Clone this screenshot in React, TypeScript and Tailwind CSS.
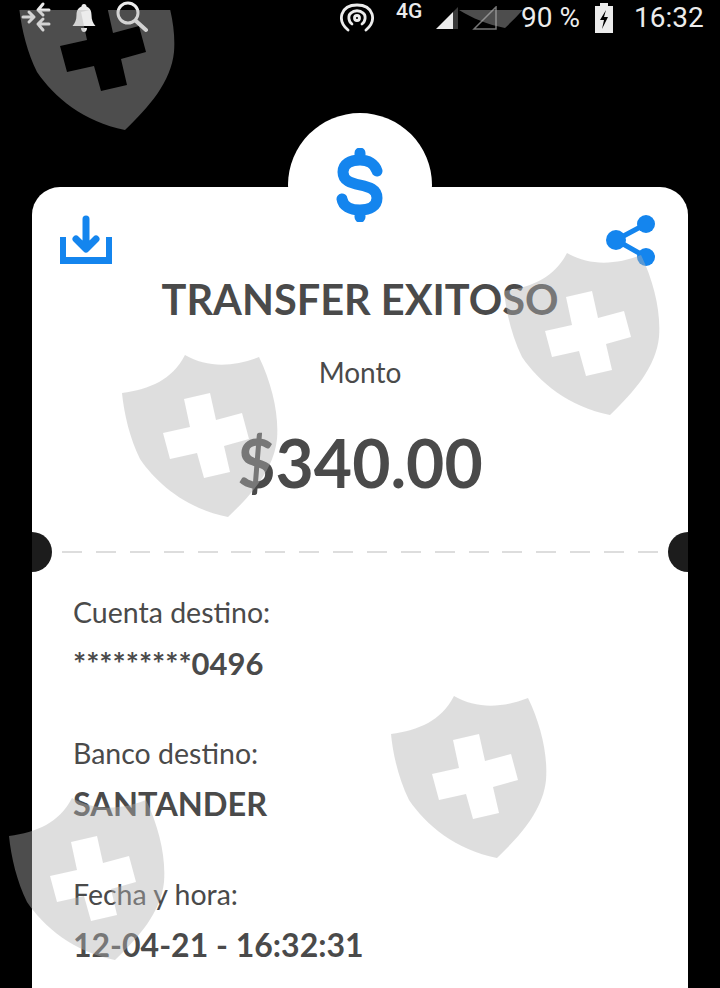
const shields = [
  'left-[19px] top-[-43px]',
  'left-[399px] top-[-145px]',
  'left-[504px] top-[242px]',
  'left-[122px] top-[344px]',
  'left-[391px] top-[685px]',
  'left-[9px] top-[787px]',
];

function Watermark({ className }: { className: string }) {
  return (
    <svg className={`absolute ${className}`} width="156" height="165" viewBox="0 0 156 165">
      <path
        fill="#b3b3b3"
        fillOpacity="0.43"
        fillRule="evenodd"
        d="M0 39C28 35 50 26 63 1C85 14 112 13 137 3C150 30 157 60 155 85C152 115 130 140 106 163C65 155 35 130 18 105C8 85 2 60 0 39ZM62 45L88 39L94 66L120 59L127 85L102 92L108 118L82 124L75 99L48 105L41 79L68 73Z"
      />
    </svg>
  );
}

function Field({ label, value, valueSize }: { label: string; value: string; valueSize: string }) {
  return (
    <div className="flex flex-col">
      <span className="h-[30px] text-[28.500px] leading-[30px] text-[#4a4a4a]">{label}</span>
      <span className={`mt-[21px] h-[30px] leading-[30px] font-bold text-[#4a4a4a] ${valueSize}`}>{value}</span>
    </div>
  );
}

function StatusBar() {
  return (
    <div className="flex h-[38px] items-start pt-[1px] text-[#ececec] font-['Roboto',sans-serif]">
      <svg className="ml-[21px]" width="30" height="32" viewBox="0 0 30 32" fill="none" stroke="currentColor" strokeWidth="3" strokeLinecap="round" strokeLinejoin="round">
        <path d="M2 16H13M8 11l5 5-5 5M28 9H17M22 3l-5 6 5 5M28 23H17M22 18l-5 5 5 6" />
      </svg>
      <svg className="ml-[21px] mt-[2px]" width="24" height="30" viewBox="0 0 24 30" fill="currentColor">
        <path d="M12 1c2 0 2.500 1.500 2.500 2.500C18.500 5 19.500 8.500 19.500 12c0 5 1.500 8 4 11H.5c2.500-3 4-6 4-11 0-3.500 1-7 5-8.500C9.500 2.500 10 1 12 1ZM9 25h6c0 2-1 4-3 4s-3-2-3-4Z" />
      </svg>
      <svg className="ml-[19px]" width="33" height="32" viewBox="0 0 33 32" fill="none" stroke="currentColor" strokeLinecap="round">
        <circle cx="13" cy="12" r="10" strokeWidth="3" />
        <path d="M21 20L31 29" strokeWidth="4" />
      </svg>
      <svg className="ml-[192px] mt-[2px]" width="34" height="30" viewBox="0 0 34 30" fill="none" stroke="currentColor" strokeWidth="2.800" strokeLinecap="round">
        <path d="M8 27C2 22 0.500 16 2 11C4 5 10 2 17 2C24 2 30 5 32 11C33.500 16 32 22 26 27" />
        <path d="M12 21C8 18 8 12 11 10C14 7 20 7 23 10C26 12 26 18 22 21" />
        <circle cx="17" cy="15" r="2.500" />
      </svg>
      <span className="ml-[22px] mt-[-2px] w-[28px] text-[21px] leading-[24px] font-medium">4G</span>
      <svg className="ml-[12px] mt-[5px]" width="64" height="26" viewBox="0 0 64 26">
        <path d="M17 6L22 1V23H17Z" fill="#3a3a3a" />
        <path d="M0 23L17 6V23Z" fill="currentColor" />
        <path d="M38 23L60 1V23Z" fill="none" stroke="#777777" strokeWidth="1.500" />
      </svg>
      <span className="ml-[21px] mt-[1px] w-[60px] whitespace-nowrap text-[28px] leading-[32px]">90 %</span>
      <svg className="ml-[14px] mt-[2px]" width="18" height="30" viewBox="0 0 18 30">
        <path fillRule="evenodd" fill="currentColor" d="M5 0H13V3H18V30H0V3H5ZM11 7L5 17H9L7 26L13 14H9Z" />
      </svg>
      <span className="ml-[21px] mt-[1px] text-[28px] leading-[32px]">16:32</span>
    </div>
  );
}

export default function App() {
  return (
    <div className="relative h-[988px] w-[720px] overflow-hidden bg-black font-['Lato',sans-serif]">
      <StatusBar />

      <div className="relative z-10 mt-[75px] flex justify-center">
        <div className="flex h-[144px] w-[144px] justify-center rounded-full bg-white pt-[35px]">
          <svg width="48" height="74" viewBox="0 0 48 74" fill="none" stroke="#1485ee" strokeWidth="11" strokeLinecap="round">
            <path d="M24 5V12M24 62V69M41 23C39 16 32 12 24 12C14 12 7 16 7 24C7 33 15 35 24 37C33 39 41 41 41 50C41 58 34 62 24 62C14 62 7 58 6 51" />
          </svg>
        </div>
      </div>

      <div className="absolute left-[32px] top-[187px] h-[801px] w-[656px] overflow-hidden rounded-t-[28px] bg-white">
        <div className="flex items-start justify-between pl-[28px] pr-[31px] pt-[28px]">
          <svg width="52" height="50" viewBox="0 0 52 50" fill="#1485ee">
            <path d="M0 22H6V42H46V22H52V49H0Z" />
            <path d="M26 4V32M16 24L26 34L36 24" fill="none" stroke="#1485ee" strokeWidth="7" strokeLinecap="round" strokeLinejoin="round" />
          </svg>
          <svg width="52" height="52" viewBox="0 0 52 52" fill="#1485ee">
            <path d="M11 25L41 9M11 25L41 42" stroke="#1485ee" strokeWidth="5" />
            <circle cx="11" cy="25" r="10" />
            <circle cx="41" cy="9" r="9" />
            <circle cx="41" cy="42" r="9" />
          </svg>
        </div>

        <h1 className="mt-[10px] text-center text-[41.500px] leading-[44px] font-bold text-[#4a4a4a]">TRANSFER EXITOSO</h1>
        <p className="mt-[33px] text-center text-[28px] leading-[36px] text-[#4a4a4a]">Monto</p>
        <p className="mt-[38px] text-center text-[66px] leading-[70px] font-bold text-[#4a4a4a]">$340.00</p>

        <div className="mt-[53px] flex justify-between px-[30px]">
          {Array.from({ length: 18 }, (_, i) => (
            <div key={i} className="h-[2px] w-[20px] bg-[#dddddd]" />
          ))}
        </div>

        <div className="mt-[44px] flex flex-col gap-[60px] pl-[41px]">
          <Field label="Cuenta destino:" value="*********0496" valueSize="text-[31px]" />
          <Field label="Banco destino:" value="SANTANDER" valueSize="text-[32.500px]" />
          <Field label="Fecha y hora:" value="12-04-21 - 16:32:31" valueSize="text-[32px]" />
        </div>

        <div className="absolute left-[-20px] top-[345px] h-[40px] w-[40px] rounded-full bg-[#1c1c1c]" />
        <div className="absolute right-[-20px] top-[345px] h-[40px] w-[40px] rounded-full bg-[#1c1c1c]" />
      </div>

      <div className="absolute inset-x-0 bottom-0 top-[10px] z-20 overflow-hidden">
        {shields.map((s) => (
          <Watermark key={s} className={s} />
        ))}
      </div>
    </div>
  );
}
